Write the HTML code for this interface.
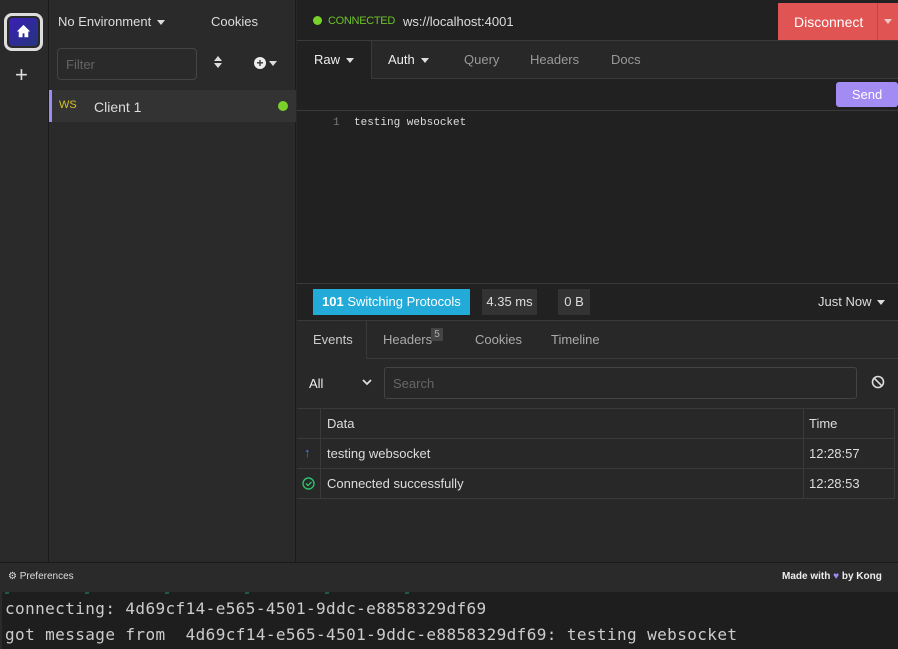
<!DOCTYPE html><html><head><style>
*{box-sizing:border-box;margin:0;padding:0}
body{width:898px;height:649px;overflow:hidden;background:#282828;font-family:"Liberation Sans",sans-serif;font-size:13px;color:#ddd;position:relative}
.a{position:absolute}
.caret{display:inline-block;width:0;height:0;border-left:4px solid transparent;border-right:4px solid transparent;border-top:5px solid #ddd;vertical-align:middle;margin-left:6px}
</style></head><body>
<div class="a" style="left:0;top:0;width:49px;height:562px;background:#2a2a2a;border-right:1px solid #1a1a1a"></div>
<div class="a" style="left:4px;top:13px;width:39px;height:38px;border:3px solid #ddd;border-radius:8px;background:#2a2a2a"></div>
<div class="a" style="left:9px;top:18px;width:29px;height:28px;border-radius:4px;background:linear-gradient(135deg,#3b1fb8,#23357a)"></div>
<svg class="a" style="left:14px;top:22px" width="19" height="19" viewBox="0 0 20 20"><path d="M10 3L3 10h2v6h4v-4h2v4h4v-6h2z" fill="#fff"/></svg>
<div class="a" style="left:15px;top:62px;font-size:22px;color:#ddd;font-weight:300">+</div>
<div class="a" style="left:49px;top:0;width:247px;height:562px;background:#2a2a2a;border-right:1px solid #1a1a1a"></div>
<div class="a" style="left:58px;top:14px;color:#ddd">No Environment<span class="caret"></span></div>
<div class="a" style="left:211px;top:14px;color:#ddd">Cookies</div>
<div class="a" style="left:57px;top:48px;width:140px;height:32px;border:1px solid #444;border-radius:4px;padding:8px;color:#666">Filter</div>
<div class="a" style="left:214px;top:56px;width:0;height:0;border-left:4px solid transparent;border-right:4px solid transparent;border-bottom:5px solid #ddd"></div>
<div class="a" style="left:214px;top:63px;width:0;height:0;border-left:4px solid transparent;border-right:4px solid transparent;border-top:5px solid #ddd"></div>
<div class="a" style="left:254px;top:57px;width:12px;height:12px;border-radius:50%;background:#eee;color:#333;font-size:12px;line-height:12px;text-align:center;font-weight:bold">+</div>
<div class="a" style="left:269px;top:61px;width:0;height:0;border-left:4px solid transparent;border-right:4px solid transparent;border-top:5px solid #ddd"></div>
<div class="a" style="left:49px;top:90px;width:247px;height:32px;background:#333;border-left:3px solid #9d8cf6"></div>
<div class="a" style="left:59px;top:99px;font-size:11px;color:#d4c426">WS</div>
<div class="a" style="left:94px;top:99px;font-size:14px;color:#ddd">Client 1</div>
<div class="a" style="left:278px;top:101px;width:10px;height:10px;border-radius:50%;background:#7ad12a"></div>
<div class="a" style="left:297px;top:0;width:601px;height:41px;background:#212121;border-bottom:1px solid #3a3a3a"></div>
<div class="a" style="left:313px;top:16px;width:9px;height:9px;border-radius:50%;background:#7ad12a"></div>
<div class="a" style="left:328px;top:15px;color:#6ec12a;font-size:11px;letter-spacing:-0.3px">CONNECTED</div>
<div class="a" style="left:403px;top:14px;color:#ddd">ws://localhost:4001</div>
<div class="a" style="left:778px;top:3px;width:120px;height:37px;background:#e05454"></div>
<div class="a" style="left:794px;top:14px;color:#fff;font-size:14px">Disconnect</div>
<div class="a" style="left:877px;top:3px;width:1px;height:37px;background:#c04444"></div>
<div class="a" style="left:884px;top:19px;width:0;height:0;border-left:4px solid transparent;border-right:4px solid transparent;border-top:5px solid #f3c6c6"></div>
<div class="a" style="left:297px;top:41px;width:601px;height:38px;background:#282828"></div>
<div class="a" style="left:297px;top:41px;width:74px;height:38px;background:#212121"></div>
<div class="a" style="left:371px;top:78px;width:527px;height:1px;background:#3a3a3a"></div>
<div class="a" style="left:371px;top:41px;width:1px;height:38px;background:#3a3a3a"></div>
<div class="a" style="left:314px;top:52px;color:#eee">Raw<span class="caret"></span></div>
<div class="a" style="left:388px;top:52px;color:#eee">Auth<span class="caret"></span></div>
<div class="a" style="left:464px;top:52px;color:#999">Query</div>
<div class="a" style="left:530px;top:52px;color:#999">Headers</div>
<div class="a" style="left:611px;top:52px;color:#999">Docs</div>
<div class="a" style="left:297px;top:79px;width:601px;height:32px;background:#212121;border-bottom:1px solid #3a3a3a"></div>
<div class="a" style="left:836px;top:82px;width:62px;height:25px;background:#a28cf4;border-radius:3px;color:#fff;text-align:center;line-height:25px">Send</div>
<div class="a" style="left:297px;top:111px;width:601px;height:173px;background:#212121"></div>
<div class="a" style="left:333px;top:117px;font-family:'Liberation Mono',monospace;font-size:11px;color:#777">1</div>
<div class="a" style="left:354px;top:117px;font-family:'Liberation Mono',monospace;font-size:11px;color:#ddd">testing websocket</div>
<div class="a" style="left:297px;top:283px;width:601px;height:38px;background:#212121;border-top:1px solid #3a3a3a;border-bottom:1px solid #3a3a3a"></div>
<div class="a" style="left:313px;top:289px;width:157px;height:26px;background:#22aad8;color:#fff;line-height:26px;padding-left:9px"><b>101</b> Switching Protocols</div>
<div class="a" style="left:482px;top:289px;width:55px;height:26px;background:#333;color:#ddd;line-height:26px;text-align:center">4.35 ms</div>
<div class="a" style="left:558px;top:289px;width:32px;height:26px;background:#333;color:#ddd;line-height:26px;text-align:center">0 B</div>
<div class="a" style="left:818px;top:294px;color:#ddd">Just Now<span class="caret"></span></div>
<div class="a" style="left:367px;top:358px;width:531px;height:1px;background:#3a3a3a"></div>
<div class="a" style="left:366px;top:321px;width:1px;height:38px;background:#3a3a3a"></div>
<div class="a" style="left:313px;top:332px;color:#ccc">Events</div>
<div class="a" style="left:383px;top:332px;color:#aaa">Headers</div>
<div class="a" style="left:431px;top:328px;width:12px;height:13px;background:#444;color:#aaa;font-size:10px;text-align:center;line-height:13px">5</div>
<div class="a" style="left:475px;top:332px;color:#aaa">Cookies</div>
<div class="a" style="left:551px;top:332px;color:#aaa">Timeline</div>
<div class="a" style="left:309px;top:376px;color:#eee">All</div>
<svg class="a" style="left:362px;top:378px" width="10" height="8"><path d="M1 2l4 4 4-4" stroke="#ddd" stroke-width="1.8" fill="none"/></svg>
<div class="a" style="left:384px;top:367px;width:473px;height:32px;border:1px solid #444;border-radius:3px;padding:8px;color:#666">Search</div>
<svg class="a" style="left:871px;top:375px" width="14" height="14"><circle cx="7" cy="7" r="5.5" stroke="#ddd" stroke-width="1.6" fill="none"/><path d="M3 3l8 8" stroke="#ddd" stroke-width="1.6"/></svg>
<div class="a" style="left:297px;top:408px;width:598px;height:91px;border-top:1px solid #3a3a3a;border-right:1px solid #3a3a3a"></div>
<div class="a" style="left:297px;top:438px;width:598px;height:1px;background:#3a3a3a"></div>
<div class="a" style="left:297px;top:468px;width:598px;height:1px;background:#3a3a3a"></div>
<div class="a" style="left:297px;top:498px;width:598px;height:1px;background:#3a3a3a"></div>
<div class="a" style="left:320px;top:408px;width:1px;height:91px;background:#3a3a3a"></div>
<div class="a" style="left:803px;top:408px;width:1px;height:91px;background:#3a3a3a"></div>
<div class="a" style="left:327px;top:416px;color:#ddd">Data</div>
<div class="a" style="left:809px;top:416px;color:#ddd">Time</div>
<div class="a" style="left:304px;top:445px;color:#4b7ee0;font-size:13px;font-weight:bold">↑</div>
<div class="a" style="left:327px;top:446px;color:#ddd">testing websocket</div>
<div class="a" style="left:809px;top:446px;color:#ddd">12:28:57</div>
<svg class="a" style="left:302px;top:477px" width="13" height="13"><circle cx="6.5" cy="6.5" r="5.5" stroke="#2dbf6a" stroke-width="1.4" fill="none"/><path d="M4 6.5l2 2 3.5-3.5" stroke="#2dbf6a" stroke-width="1.4" fill="none"/></svg>
<div class="a" style="left:327px;top:476px;color:#ddd">Connected successfully</div>
<div class="a" style="left:809px;top:476px;color:#ddd">12:28:53</div>
<div class="a" style="left:0;top:562px;width:898px;height:30px;background:#2a2a2a;border-top:1px solid #1a1a1a"></div>
<div class="a" style="left:8px;top:571px;font-size:10px;color:#ddd">⚙ Preferences</div>
<div class="a" style="left:782px;top:571px;font-size:10px;color:#eee;font-weight:bold">Made with <span style="color:#9d8cf6">♥</span> by Kong</div>
<div class="a" style="left:0;top:592px;width:898px;height:57px;background:#1e1e1e;border-left:2px solid #2a2a2a"></div>
<div class="a" style="left:5px;top:592px;width:460px;height:2px;background:repeating-linear-gradient(90deg,#1f5a3a 0 4px,transparent 4px 80px)"></div>
<div class="a" style="left:5px;top:599px;font-family:'DejaVu Sans Mono',monospace;font-size:16px;color:#ccc;letter-spacing:0.4px">connecting: 4d69cf14-e565-4501-9ddc-e8858329df69</div>
<div class="a" style="left:5px;top:625px;font-family:'DejaVu Sans Mono',monospace;font-size:16px;color:#ccc;letter-spacing:0.4px;white-space:pre">got message from  4d69cf14-e565-4501-9ddc-e8858329df69: testing websocket</div>
</body></html>
